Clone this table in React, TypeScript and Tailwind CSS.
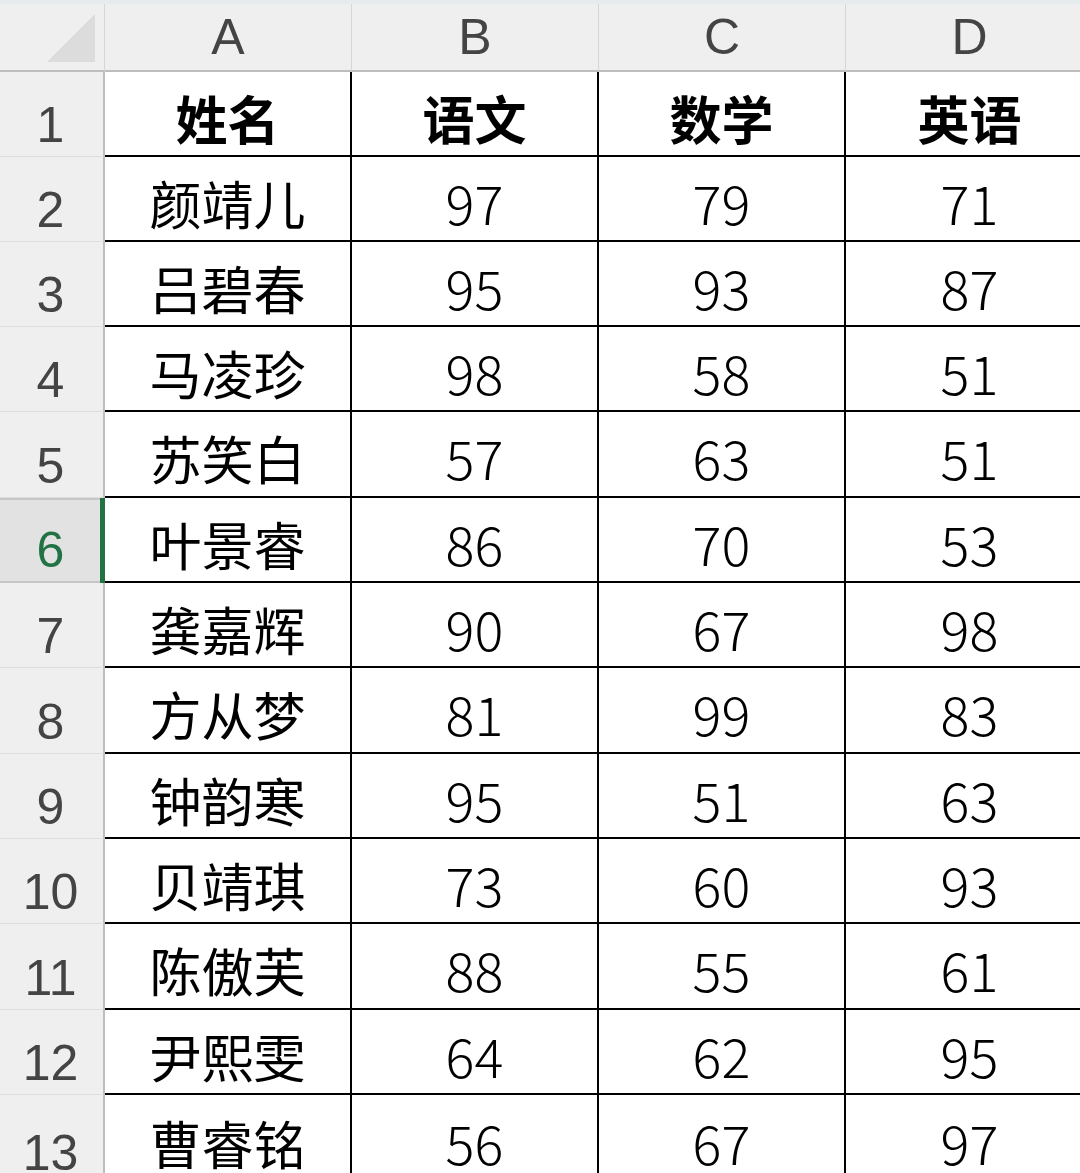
import React from "react";

const rows: [string, number, number, number][] = [
  ["颜靖儿", 97, 79, 71],
  ["吕碧春", 95, 93, 87],
  ["马凌珍", 98, 58, 51],
  ["苏笑白", 57, 63, 51],
  ["叶景睿", 86, 70, 53],
  ["龚嘉辉", 90, 67, 98],
  ["方从梦", 81, 99, 83],
  ["钟韵寒", 95, 51, 63],
  ["贝靖琪", 73, 60, 93],
  ["陈傲芙", 88, 55, 61],
  ["尹熙雯", 64, 62, 95],
  ["曹睿铭", 56, 67, 97],
];

const tall = new Set([5, 8, 11]);

const cjk = "font-['Noto_Sans_CJK_SC',sans-serif]";
const hdr = "font-['Liberation_Sans','Noto_Sans',sans-serif]";

function RowHead({ n, h, selected }: { n: number; h: string; selected?: boolean }) {
  return (
    <div
      className={
        "relative flex items-end justify-center pb-[6px] border-r-2 text-[50px] leading-none " +
        hdr +
        " " +
        h +
        (selected
          ? " bg-[#e2e2e2] text-[#217346] border-r-[#217346] border-y-2 border-y-[#c6c6c6]"
          : " bg-[#efefef] text-[#444444] border-r-[#bdbdbd] border-b border-b-[#dedede]")
      }
    >
      {selected && <div className="absolute right-[-2px] top-[-2px] bottom-[-2px] w-[5px] bg-[#217346]" />}
      <span className="pr-[2px]">{n}</span>
    </div>
  );
}

function Cell({
  children,
  h,
  bold,
  num,
  last,
}: {
  children: React.ReactNode;
  h: string;
  bold?: boolean;
  num?: boolean;
  last?: boolean;
}) {
  return (
    <div
      className={
        "flex items-center justify-center border-b-2 border-black bg-white text-black leading-none " +
        cjk +
        " " +
        h +
        (num ? " text-[54px] font-light pt-[6px]" : " text-[52px] pt-[8px]") +
        (last ? "" : " border-r-2") +
        (bold ? " font-bold" : "")
      }
    >
      {children}
    </div>
  );
}

export default function App() {
  return (
    <div className="w-[1080px] h-[1173px] overflow-hidden bg-white">
      <div className="h-[4px] bg-[#e6ebee]" />
      <div className="grid grid-cols-[105px_247px_247px_247px_247px]">
        {/* header row */}
        <div className="relative h-[68px] bg-[#efefef] border-b-2 border-b-[#bdbdbd] border-r border-r-[#d6d6d6]">
          <svg className="absolute left-[47px] top-[10px]" width="49" height="49" viewBox="0 0 49 49">
            <polygon points="48,0 48,48 0,48" fill="#dcdcdc" />
          </svg>
        </div>
        {["A", "B", "C", "D"].map((c, i) => (
          <div
            key={c}
            className={
              "flex items-center justify-center h-[68px] bg-[#efefef] border-b-2 border-b-[#bdbdbd] text-[50px] leading-none text-[#444444] " +
              hdr +
              (i < 3 ? " border-r border-r-[#d6d6d6]" : "")
            }
          >
            {c}
          </div>
        ))}

        {/* row 1 */}
        <RowHead n={1} h="h-[85px]" />
        {["姓名", "语文", "数学", "英语"].map((t, i) => (
          <Cell key={t} h="h-[85px]" bold last={i === 3}>
            {t}
          </Cell>
        ))}

        {rows.map((r, idx) => {
          const n = idx + 2;
          const h = n === 13 ? "h-[90px]" : tall.has(n) ? "h-[86px]" : "h-[85px]";
          return (
            <React.Fragment key={n}>
              <RowHead n={n} h={h} selected={n === 6} />
              <Cell h={h}>{r[0]}</Cell>
              <Cell h={h} num>
                {r[1]}
              </Cell>
              <Cell h={h} num>
                {r[2]}
              </Cell>
              <Cell h={h} num last>
                {r[3]}
              </Cell>
            </React.Fragment>
          );
        })}
      </div>
    </div>
  );
}
